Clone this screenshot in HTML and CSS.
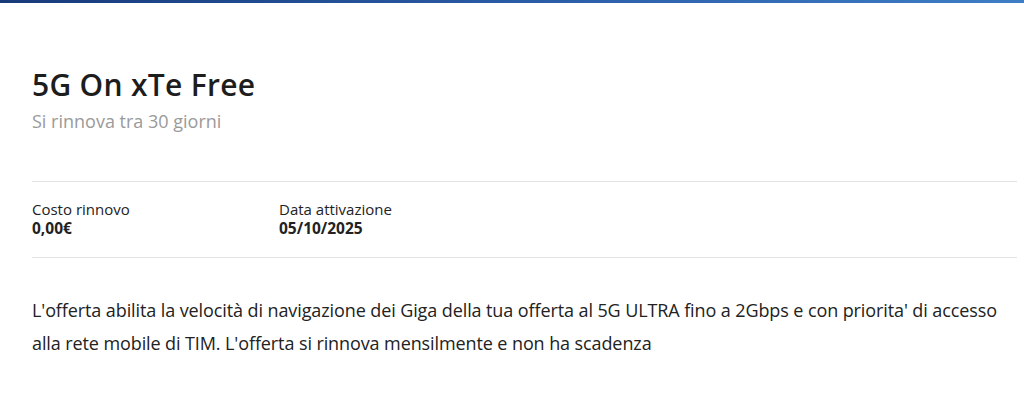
FILE: index.html
```html
<!DOCTYPE html>
<html lang="it">
<head>
<meta charset="utf-8">
<link rel="stylesheet" href="styles.css">
</head>
<body>
<div class="topbar"></div>
<main class="card">
  <header class="head">
    <h1 class="title">5G On xTe Free</h1>
    <p class="subtitle">Si rinnova tra 30 giorni</p>
  </header>
  <section class="info">
    <div class="cell">
      <span class="label">Costo rinnovo</span>
      <span class="value">0,00€</span>
    </div>
    <div class="cell">
      <span class="label">Data attivazione</span>
      <span class="value">05/10/2025</span>
    </div>
  </section>
  <p class="desc">L'offerta abilita la velocità di navigazione dei Giga della tua offerta al 5G ULTRA fino a 2Gbps e con priorita' di accesso alla rete mobile di TIM. L'offerta si rinnova mensilmente e non ha scadenza</p>
</main>
</body>
</html>
```
FILE: styles.css
```css
html, body {
  margin: 0;
  padding: 0;
  background: #fff;
}
body {
  font-family: "Open Sans", "Noto Sans", sans-serif;
  color: #1f1f1f;
}
.topbar {
  height: 3px;
  background: linear-gradient(90deg, #173a7a 0%, #2a5ba5 50%, #3d7ec6 100%);
}
.card {
  padding: 0 7px 0 32px;
}
.head {
  padding-top: 64px;
  padding-bottom: 49px;
}
.title {
  margin: 0;
  font-size: 30px;
  font-weight: 600;
  line-height: 36px;
  letter-spacing: 0.3px;
  color: #1d1d1d;
}
.subtitle {
  margin: 7px 0 0;
  font-size: 18px;
  line-height: 22px;
  color: #9a9a9a;
  font-weight: 500;
}
.info {
  display: flex;
  border-top: 1px solid #e3e3e3;
  border-bottom: 1px solid #e3e3e3;
  padding: 18px 0 19px;
}
.cell {
  display: flex;
  flex-direction: column;
  width: 247px;
}
.label {
  font-size: 15px;
  line-height: 18px;
  color: #222;
}
.value {
  font-size: 15.5px;
  line-height: 20px;
  font-weight: 700;
  color: #222;
}
.desc {
  margin: 36px 0 0;
  font-size: 18px;
  line-height: 33px;
  letter-spacing: -0.1px;
  color: #222;
}
```
